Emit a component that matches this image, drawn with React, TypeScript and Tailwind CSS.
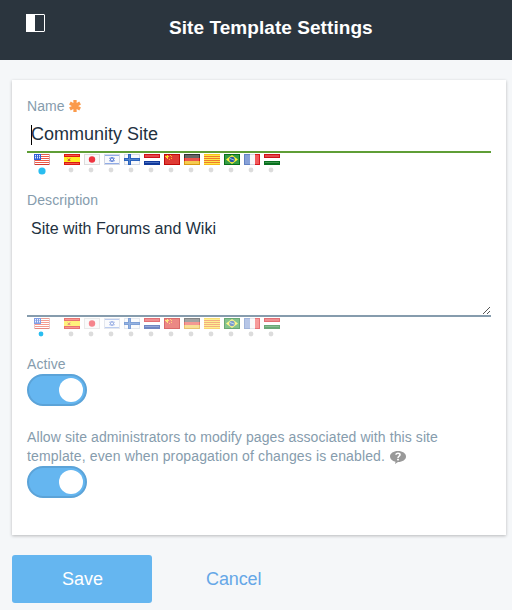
import React from "react";

const LOCALES = ["us", "es", "jp", "il", "fi", "nl", "cn", "de", "ct", "br", "fr", "hu"];

function Bands({ colors }: { colors: string[] }) {
  return (
    <>
      {colors.map((c, i) => (
        <rect key={i} x="0" y={i} width="16" height="1" fill={c} />
      ))}
    </>
  );
}

const FLAGS: Record<string, { edge: string; art: React.ReactNode }> = {
  us: {
    edge: "transparent",
    art: (
      <>
        <Bands colors={["#e0604f", "#fff", "#ee5a48", "#fff", "#ee5a48", "#fff", "#ee5a48", "#fff", "#ee5a48", "#fff", "#d5382e"]} />
        <rect width="7" height="6" fill="#2f5fd6" />
        <path d="M1 1.5h6M1 3.5h6" stroke="#dbe5ff" strokeDasharray="1 1" />
        <path d="M1 2.5h5M1 4.5h5" stroke="#7d9be4" strokeDasharray="1 1" />
        <path d="M.5 6v5M15.5 0v11" stroke="#dba5a5" />
      </>
    ),
  },
  es: {
    edge: "transparent",
    art: (
      <>
        <rect width="16" height="11" fill="#dc1812" />
        <path d="M1 1.5h14M1 9.5h14" stroke="#f3564a" />
        <rect y="3" width="16" height="5" fill="#ffec22" />
        <path d="M3 4h1v1H3zM5 4h2v1H5zM3 6h1v1H3zM6 6h1v1H6z" fill="#efac36" />
        <rect x="4" y="5" width="2" height="2" fill="#d2552f" />
      </>
    ),
  },
  jp: {
    edge: "#dcdcdc",
    art: (
      <>
        <rect width="16" height="11" fill="#f8f8f8" />
        <circle cx="8" cy="5.5" r="3.2" fill="#ef3340" />
      </>
    ),
  },
  il: {
    edge: "#d3d8e4",
    art: (
      <>
        <rect width="16" height="11" fill="#f8f9fc" />
        <path d="M1 1.5h14M1 9.5h14" stroke="#91ace6" />
        <path d="M8 3 10.4 7H5.6ZM8 8 5.6 4h4.8Z" fill="none" stroke="#5479d3" strokeWidth=".8" />
      </>
    ),
  },
  fi: {
    edge: "transparent",
    art: (
      <>
        <rect width="16" height="11" fill="#f8f9fc" />
        <path d="M0 .5h16M0 10.5h16M.5 0v11M15.5 0v11" stroke="#d3dae6" />
        <path d="M0 5.5h16M5.5 0v11" stroke="#2962bd" strokeWidth="3" />
        <path d="M1 5.5h14M5.5 1v9" stroke="#5082cc" strokeWidth="1" />
      </>
    ),
  },
  nl: {
    edge: "transparent",
    art: (
      <>
        <rect width="16" height="11" fill="#fff" />
        <rect width="16" height="4" fill="#cf1018" />
        <path d="M1 1.5h14M1 2.5h14" stroke="#e2484a" />
        <rect y="7" width="16" height="4" fill="#10399b" />
        <path d="M1 8.5h14" stroke="#4a6fc2" />
      </>
    ),
  },
  cn: {
    edge: "#c00a08",
    art: (
      <>
        <rect width="16" height="11" fill="#df3a34" />
        <path d="M3 1h1v1h1v1H4v2H3V4H2V3H1V2h2z" fill="#ffd12a" />
        <path d="M6 1h1v1H6zm1 1h1v1H7zm0 2h1v1H7zM5 5h1v1H5z" fill="#ffb52a" />
      </>
    ),
  },
  de: {
    edge: "transparent",
    art: (
      <>
        <rect width="16" height="4" fill="#333" />
        <rect x="1" y="1" width="14" height="3" fill="#666" />
        <rect y="4" width="16" height="3" fill="#d51a14" />
        <rect x="1" y="4" width="14" height="3" fill="#ec544c" />
        <rect y="7" width="16" height="4" fill="#d99b12" />
        <rect x="1" y="7" width="14" height="3" fill="#f5cb50" />
      </>
    ),
  },
  ct: {
    edge: "transparent",
    art: <Bands colors={["#f7c817", "#fde84a", "#ee7a2d", "#fde84a", "#ee7a2d", "#fde84a", "#ee7a2d", "#fde84a", "#ee7a2d", "#fde84a", "#f7b817"]} />,
  },
  br: {
    edge: "#087018",
    art: (
      <>
        <rect width="16" height="11" fill="#359c46" />
        <path d="m8 1 6 4.5L8 10 2 5.5Z" fill="#fff339" />
        <circle cx="8" cy="5.5" r="2.7" fill="#2857a7" />
        <path d="m6 4.5 4 1.5" stroke="#a7d4e8" strokeWidth=".9" />
      </>
    ),
  },
  fr: {
    edge: "transparent",
    art: (
      <>
        <rect width="16" height="11" fill="#f7f7f9" />
        <rect width="6" height="11" fill="#87a1d8" />
        <rect x="11" width="5" height="11" fill="#f2595a" />
        <path d="M0 .5h6M.5 0v11M0 10.5h6" stroke="#6483c3" />
        <path d="M11 .5h5M15.5 0v11M11 10.5h5" stroke="#d71920" />
        <path d="M6 .5h5M6 10.5h5" stroke="#d3d6de" />
      </>
    ),
  },
  hu: {
    edge: "transparent",
    art: (
      <>
        <rect width="16" height="11" fill="#fff" />
        <rect width="16" height="4" fill="#cf1018" />
        <path d="M1 1.5h14M1 2.5h14" stroke="#e2484a" />
        <rect y="7" width="16" height="4" fill="#08701f" />
        <path d="M1 8.5h14" stroke="#3c964c" />
      </>
    ),
  },
};

function Flag({ code }: { code: string }) {
  const { edge, art } = FLAGS[code];
  return (
    <svg width="16" height="11" viewBox="0 0 16 11" className="block">
      {art}
      <rect x=".5" y=".5" width="15" height="10" fill="none" stroke={edge} />
    </svg>
  );
}

function LocaleRow({ focused = false }: { focused?: boolean }) {
  return (
    <div className="flex h-[22px] pl-[7px] pt-px">
      {LOCALES.map((code, i) => (
        <div key={code} className={i === 0 ? "mr-[14px] w-4" : "mr-1 w-4"}>
          <div className={focused ? "" : "opacity-60"}>
            <Flag code={code} />
          </div>
          <svg width="16" height="12" viewBox="0 0 16 12" className="block">
            {i === 0 ? (
              <circle cx={focused ? 8 : 7} cy={focused ? 6 : 5} r={focused ? 3.6 : 2.4} fill="#29bdf0" />
            ) : (
              <circle cx="7" cy="5" r="2.4" fill="#dcdcdc" />
            )}
          </svg>
        </div>
      ))}
    </div>
  );
}

function Toggle() {
  return (
    <button
      type="button"
      role="switch"
      aria-checked="true"
      className="flex h-8 w-[60px] items-center justify-end rounded-full border-2 border-[#5ba3d8] bg-[#65b6f0] pr-0.5"
    >
      <span className="size-6 rounded-full bg-white" />
    </button>
  );
}

export default function App() {
  return (
    <div className="h-[610px] w-[512px] overflow-hidden bg-[#f5f7f9] font-['Liberation_Sans',Arial,sans-serif] text-[#869cad]">
      <header className="flex h-[60px] bg-[#2b353e] pl-[26px] pt-[14px]">
        <svg width="19" height="18" viewBox="0 0 19 18" className="shrink-0">
          <rect x=".5" y=".5" width="18" height="17" rx=".5" fill="none" stroke="#fff" />
          <rect width="9" height="18" fill="#fff" />
        </svg>
        <h1 className="ml-[124px] whitespace-nowrap pt-px text-[19px] font-bold leading-[26px] tracking-[0.06px] text-white">
          Site Template Settings
        </h1>
      </header>

      <main className="ml-3 mt-5 h-[455px] w-[494px] bg-white pl-[15px] pt-4 shadow-[0_1px_3px_rgba(0,0,0,0.25)]">
        <div className="flex h-5 items-center text-[14px] leading-5 tracking-[0.1px]">
          Name
          <svg width="12" height="12" viewBox="0 0 12 12" className="ml-1">
            <path d="M6 0v12M.9 3l10.2 6M11.1 3L.9 9" stroke="#fb9a4b" strokeWidth="3.3" />
          </svg>
        </div>
        <div className="flex h-[37px] w-[464px] items-center border-b-2 border-[#5f9e36] pl-1 pt-0.5 text-[18px] leading-[33px] text-[#22313f]">
          <span className="-mr-px h-5 w-px bg-black" />
          Community Site
        </div>
        <LocaleRow focused />
        <div className="mt-[15px] h-5 text-[14px] leading-5 tracking-[0.1px]">Description</div>
        <div className="flex h-[107px] w-[464px] justify-between border-b-2 border-[#869cad] pl-1 pt-2 text-[16px] leading-[21px] text-[#22313f]">
          <span>Site with Forums and Wiki</span>
          <svg width="7" height="7" viewBox="0 0 7 7" className="mb-px mr-px self-end" shapeRendering="crispEdges">
            <path d="M0 6h1v1H0zM1 5h1v1H1zM2 4h1v1H2zM3 3h1v1H3zM4 2h1v1H4zM5 1h1v1H5zM6 0h1v1H6zM4 6h1v1H4zM5 5h1v1H5zM6 4h1v1H6z" fill="#555" />
          </svg>
        </div>
        <LocaleRow />
        <div className="mt-[15px] h-5 text-[14px] leading-5 tracking-[0.1px]">Active</div>
        <Toggle />
        <div className="mt-[22px] text-[14px] leading-[19px]">
          <p className="h-[19px] whitespace-nowrap tracking-[0.095px]">Allow site administrators to modify pages associated with this site</p>
          <p className="flex h-[19px] whitespace-nowrap tracking-[0.13px]">
            template, even when propagation of changes is enabled.
            <svg width="16" height="13" viewBox="0 0 16 13" className="ml-[5px] mt-1">
              <path d="M8 0c4.6 0 8 2.4 8 5.5S12.6 11 8 11L5 13l.5-2.3C2.2 10 0 8 0 5.5 0 2.4 3.4 0 8 0Z" fill="#999" />
              <path d="M6 3.7C6 1.7 10 1.8 10 3.8 10 5.2 8 5 8 6.9" fill="none" stroke="#fff" strokeWidth="1.6" />
              <rect x="7.1" y="7.8" width="1.8" height="1.6" fill="#fff" />
            </svg>
          </p>
        </div>
        <Toggle />
      </main>

      <div className="ml-3 mt-5 flex text-[18px] leading-[48px]">
        <button type="button" className="h-12 w-[140px] rounded-[3px] bg-[#65b6f0] pl-px text-white">Save</button>
        <button type="button" className="ml-[54px] h-12 tracking-[-0.1px] text-[#65a7e7]">Cancel</button>
      </div>
    </div>
  );
}
